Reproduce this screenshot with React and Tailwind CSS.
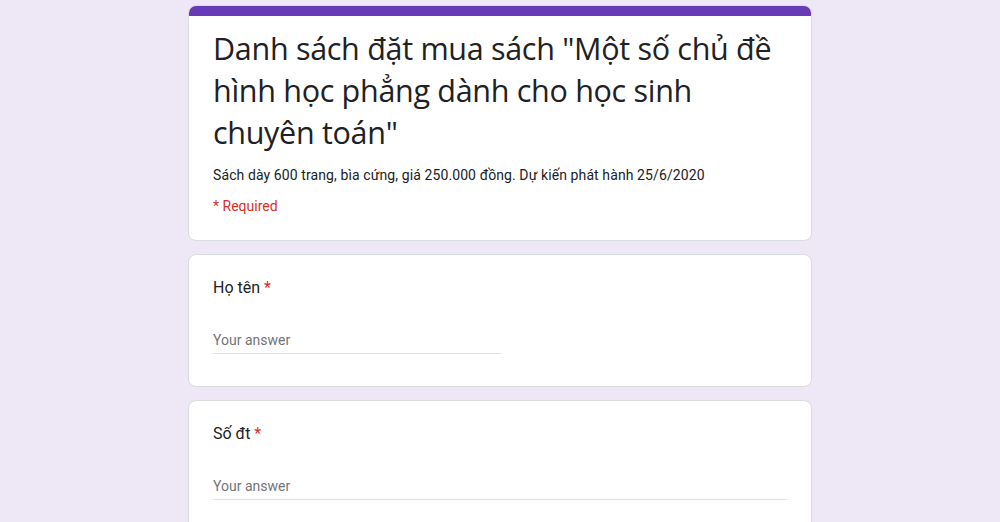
export default function App() {
  const font = { fontFamily: "Roboto, 'Noto Sans', sans-serif" };
  return (
    <div className="min-h-[522px] w-full bg-[#ede7f6] pt-[5px]" style={font}>
      <div className="mx-auto flex w-[624px] flex-col gap-[13px]">
        <div className="overflow-hidden rounded-[8px] border border-[#dadce0] bg-white">
          <div className="h-[10px] bg-[#673ab7]"></div>
          <div className="px-[24px] pb-[24px] pt-[11px]">
            <div className="text-[30.5px] leading-[42px] text-[#202124]" style={{ fontFamily: "'Open Sans', Roboto, sans-serif", letterSpacing: "-0.3px" }}>
              Danh sách đặt mua sách "Một số chủ đề hình học phẳng dành cho học sinh chuyên toán"
            </div>
            <div className="mt-[12px] text-[14px] leading-[20px] text-[#202124]" style={{ letterSpacing: "0.1px" }}>
              Sách dày 600 trang, bìa cứng, giá 250.000 đồng. Dự kiến phát hành 25/6/2020
            </div>
            <div className="mt-[11px] text-[14px] leading-[20px] text-[#d93025]">* Required</div>
          </div>
        </div>

        <div className="rounded-[8px] border border-[#dadce0] bg-white px-[24px] pb-[32px] pt-[21px]">
          <div className="text-[16px] leading-[24px] text-[#202124]">
            Họ tên <span className="text-[#d93025]">*</span>
          </div>
          <div className="mt-[31px] w-[288px] border-b border-[#e0e0e0] pb-[4px] text-[14px] leading-[18px] text-[#70757a]">
            Your answer
          </div>
        </div>

        <div className="rounded-[8px] border border-[#dadce0] bg-white px-[24px] pb-[32px] pt-[21px]">
          <div className="text-[16px] leading-[24px] text-[#202124]">
            Số đt <span className="text-[#d93025]">*</span>
          </div>
          <div className="mt-[31px] w-full border-b border-[#e0e0e0] pb-[4px] text-[14px] leading-[18px] text-[#70757a]">
            Your answer
          </div>
        </div>
      </div>
    </div>
  );
}
